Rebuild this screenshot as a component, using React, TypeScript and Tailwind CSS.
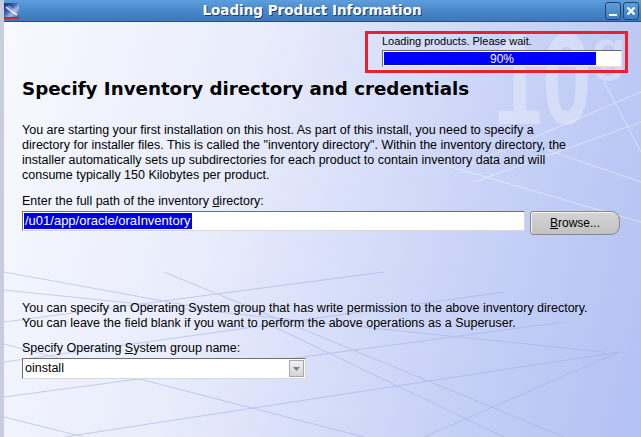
export default function App() {
  return (
    <div className="relative flex h-[437px] w-[641px] overflow-hidden bg-[#c6cede] font-['Liberation_Sans',sans-serif] text-black">
      <div className="w-[4px] shrink-0" />
      <div className="flex min-w-0 flex-1 flex-col">
        {/* title bar */}
        <div className="flex h-[22px] shrink-0 items-center border-b border-[#2b4f7a] bg-[linear-gradient(180deg,#5f9edc_0%,#4686c9_55%,#3c78bb_100%)] pr-[2px]">
          <div className="relative h-[16px] w-[15px] shrink-0 overflow-hidden bg-[linear-gradient(135deg,#1c2e7a_0%,#3f62b8_40%,#9fb8e6_60%,#2a4c9c_100%)]">
            <svg width="15" height="16" className="absolute inset-0">
              <path d="M2 4 L13 12" stroke="#ffffff" strokeWidth="2" opacity="0.8" />
              <path d="M4 3 L12 8" stroke="#cfe0ff" strokeWidth="1" opacity="0.7" />
              <rect x="0" y="14" width="15" height="2" fill="#c8242c" />
            </svg>
          </div>
          <div className="flex-1 text-center font-['DejaVu_Sans',sans-serif] text-[13.5px] font-bold leading-none text-white [text-shadow:1px_1px_0_#1d3c66]">
            Loading Product Information
          </div>
          <div className="flex gap-[2px]">
            <div className="flex h-[18px] w-[16px] items-center justify-center rounded-[3px] border border-[#24456e] bg-[linear-gradient(180deg,#609ddb,#3f7dc0)]">
              <div className="mt-[8px] h-[2px] w-[8px] bg-white" />
            </div>
            <div className="flex h-[18px] w-[16px] items-center justify-center rounded-[3px] border border-[#24456e] bg-[linear-gradient(180deg,#609ddb,#3f7dc0)]">
              <svg width="10" height="10">
                <path d="M1.5 1.5 L8.5 8.5 M8.5 1.5 L1.5 8.5" stroke="#fff" strokeWidth="2.2" />
              </svg>
            </div>
          </div>
        </div>

        {/* content */}
        <div className="relative flex-1 bg-[linear-gradient(105deg,#f7f9fe_0%,#e8ecfb_35%,#c9d3f7_70%,#b2c0f3_100%)]">
          <svg className="absolute inset-0" width="637" height="415">
            <g stroke="#ffffff" strokeWidth="1" fill="none" opacity="0.45">
              <path d="M460 145 L637 70" />
              <path d="M470 160 L637 100" />
              <path d="M430 140 L637 200" />
              <path d="M520 120 L637 160" />
              <path d="M600 60 L637 130" />
            </g>
            <g stroke="#9fb0e6" strokeWidth="1" fill="none" opacity="0.55">
              <path d="M0 268 L600 330" />
              <path d="M0 300 L380 250" />
              <path d="M0 340 L500 270" />
              <path d="M0 375 L560 300" />
              <path d="M60 415 L615 330" />
              <path d="M0 322 L360 415" />
              <path d="M160 250 L560 415" />
              <path d="M0 395 L80 415" />
              <path d="M260 300 L500 415" />
              <path d="M615 330 L420 415" />
              <path d="M0 250 L220 290" />
            </g>
          </svg>
          <div aria-hidden="true" className="pointer-events-none absolute left-[489px] top-[-8px] origin-left scale-x-[0.68] select-none text-[130px] font-bold leading-none text-white opacity-30">
            10
          </div>
          <div aria-hidden="true" className="pointer-events-none absolute left-[588px] top-[0px] select-none text-[56px] font-bold leading-none text-white opacity-30">
            g
          </div>

          <div className="relative flex flex-col pl-[18px]">
            <div className="mr-[13px] mt-[9px] flex justify-end">
              <div className="flex h-[42px] w-[263px] flex-col border-[3px] border-[#e8212f] pl-[14px] pt-[1px]">
                <div className="text-[11px] leading-[13px]">Loading products. Please wait.</div>
                <div className="mt-[2px] flex h-[17px] w-[240px] border border-t-[#6a6a6a] border-l-[#6a6a6a] border-b-[#e0e0e0] border-r-[#e0e0e0] bg-white p-[1px]">
                  <div className="relative h-full w-full">
                    <div className="h-full w-[90%] bg-[#0000ff]" />
                    <div className="absolute inset-0 flex items-center justify-center text-[12px] leading-none text-white">
                      90%
                    </div>
                  </div>
                </div>
              </div>
            </div>

            <h1 className="mt-[5px] font-['DejaVu_Sans',sans-serif] text-[18.25px] font-bold leading-[22px]">
              Specify Inventory directory and credentials
            </h1>

            <p className="mt-[23px] text-[12.5px] leading-[15px]">
              You are starting your first installation on this host. As part of this install, you need to specify a
              <br />
              directory for installer files. This is called the "inventory directory". Within the inventory directory, the
              <br />
              installer automatically sets up subdirectories for each product to contain inventory data and will
              <br />
              consume typically 150 Kilobytes per product.
            </p>

            <div className="mt-[11px] text-[12.5px] leading-[15px]">
              Enter the full path of the inventory <span className="underline">d</span>irectory:
            </div>

            <div className="mt-[2px] flex items-start gap-[5px]">
              <div className="flex h-[20px] w-[503px] items-center border border-t-[#707070] border-l-[#707070] border-b-[#d8d8d8] border-r-[#d8d8d8] bg-white pl-[1px]">
                <span className="bg-[#0000e6] px-[1px] text-[13px] leading-[16px] text-white">
                  /u01/app/oracle/oraInventory
                </span>
              </div>
              <div className="flex h-[24px] w-[90px] items-center justify-center rounded-l-[3px] rounded-r-[9px] border border-[#8a8a8a] bg-[linear-gradient(180deg,#d4d4d4,#c2c2c2)] text-[12px] text-black shadow-[inset_1px_1px_0_#f4f4f4]">
                <span>
                  <span className="underline">B</span>rowse...
                </span>
              </div>
            </div>

            <p className="mt-[66px] text-[12.5px] leading-[15px]">
              You can specify an Operating System group that has write permission to the above inventory directory.
              <br />
              You can leave the field blank if you want to perform the above operations as a Superuser.
            </p>

            <div className="mt-[10px] text-[12.5px] leading-[15px]">
              Specify Operating <span className="underline">S</span>ystem group name:
            </div>

            <div className="mt-[2px]">
              <div className="flex h-[21px] w-[284px] items-center border border-t-[#707070] border-l-[#707070] border-b-[#d8d8d8] border-r-[#d8d8d8] bg-white">
                <span className="flex-1 pl-[2px] text-[12.5px] leading-none">oinstall</span>
                <div className="mr-[1px] flex h-[17px] w-[15px] items-center justify-center border border-[#a8a8a8] bg-[linear-gradient(180deg,#f0f0f0,#d4d4d4)]">
                  <svg width="7" height="4">
                    <path d="M0 0 L7 0 L3.5 4 Z" fill="#808080" />
                  </svg>
                </div>
              </div>
            </div>
          </div>
        </div>
      </div>
    </div>
  );
}
